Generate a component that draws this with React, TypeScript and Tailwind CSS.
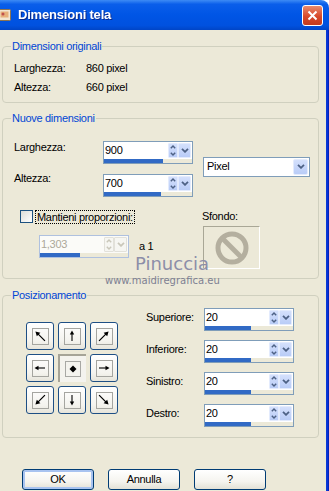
import type { ReactNode } from "react"

const font = "font-['Liberation_Sans',Arial,sans-serif]"

function Chev({ up, size = "sm", color = "#4D6185" }: { up?: boolean; size?: "sm" | "lg"; color?: string }) {
  if (size === "lg") {
    return (
      <svg width="8" height="5" viewBox="0 0 8 5">
        <path d="M1 0.8 L4 3.8 L7 0.8" fill="none" stroke={color} strokeWidth="1.8" />
      </svg>
    )
  }
  return (
    <svg width="6" height="4" viewBox="0 0 6 4">
      <path d={up ? "M0.8 3.3 L3 1 L5.2 3.3" : "M0.8 0.7 L3 3 L5.2 0.7"} fill="none" stroke={color} strokeWidth="1.4" />
    </svg>
  )
}

function Spin({ value, fill, disabled }: { value: string; fill: string; disabled?: boolean }) {
  const btn = disabled
    ? "bg-[#F6F6F2] border border-[#E2E1DA]"
    : "bg-[linear-gradient(to_bottom,#D4E0FC,#B9CCF7)] border border-[#E3EBFD]"
  const c = disabled ? "#C9C7BA" : "#4D6185"
  return (
    <div
      className={`w-[90px] h-[23px] border flex flex-col ${
        disabled ? "border-[#AFC1DF] bg-[#FBFBF8]" : "border-[#7F9DB9] bg-white"
      }`}
    >
      <div className="flex h-[17px]">
        <div className={`flex-1 pl-[1px] leading-[17px] ${disabled ? "text-[#ACA899]" : "text-black"}`}>{value}</div>
        <div className={`w-[10px] my-[1px] rounded-[1px] flex flex-col items-center justify-between py-[1px] ${btn}`}>
          <Chev up color={c} />
          <Chev color={c} />
        </div>
        <div className={`w-[13px] my-[1px] mr-[1px] rounded-[1px] flex items-center justify-center ${btn}`}>
          <Chev size="lg" color={c} />
        </div>
      </div>
      <div className="h-[4px] bg-[#ECE9D8]">
        <div className={`h-full bg-[#316AC5] ${fill}`} />
      </div>
    </div>
  )
}

function Group({ title, className, children }: { title: string; className?: string; children: ReactNode }) {
  return (
    <fieldset className={`w-[317px] ml-[2px] border border-[#D0D0BF] rounded-[4px] ${className ?? ""}`}>
      <legend className="ml-[8px] px-[1px] text-[#0046D5] leading-[13px]">{title}</legend>
      {children}
    </fieldset>
  )
}

// arrow drawn pointing up, rotated per direction
function Arrow({ deg }: { deg: number }) {
  const diag = deg % 90 !== 0
  return (
    <svg width="14" height="14" viewBox="0 0 14 14">
      <g transform={`rotate(${deg} 7 7)`}>
        {diag ? (
          <>
            <line x1="7" y1="14" x2="7" y2="3" stroke="#000" strokeWidth="1.2" />
            <polygon points="7,0.5 4.5,5 9.5,5" fill="#000" />
          </>
        ) : (
          <>
            <line x1="7" y1="12" x2="7" y2="4" stroke="#000" strokeWidth="1.1" />
            <polygon points="7,1.5 4.8,5.5 9.2,5.5" fill="#000" />
          </>
        )}
      </g>
    </svg>
  )
}

function PosButton({ deg, center }: { deg?: number; center?: boolean }) {
  if (center) {
    return (
      <div className="w-[28px] h-[28px] bg-[#F4F3EE] border-t-2 border-l-2 border-[#A6A497] flex items-center justify-center">
        <div className="w-[16px] h-[16px] border border-[#A8A8A4] flex items-center justify-center">
          <svg width="8" height="8" viewBox="0 0 8 8">
            <polygon points="4,0.5 7.5,4 4,7.5 0.5,4" fill="#000" />
          </svg>
        </div>
      </div>
    )
  }
  return (
    <div className="w-[28px] h-[28px] rounded-[3px] border border-[#1E4F85] bg-[linear-gradient(to_bottom,#FFFFFF,#F4F3EE_70%,#E6E4DA)] flex items-center justify-center">
      <div className="w-[17px] h-[17px] border border-[#A5A5A0] flex items-center justify-center">
        <Arrow deg={deg ?? 0} />
      </div>
    </div>
  )
}

function XpButton({ label, focus }: { label: string; focus?: boolean }) {
  return (
    <div
      className={`w-[72px] h-[21px] rounded-[3px] border border-[#003C74] bg-[linear-gradient(to_bottom,#FFFFFF,#F5F4EF_60%,#E3E1D6)] flex items-center justify-center leading-[13px] ${
        focus ? "shadow-[inset_0_0_0_2px_#A8C3F0]" : ""
      }`}
    >
      {label}
    </div>
  )
}

export default function App() {
  const posRows = [
    { label: "Superiore:" },
    { label: "Inferiore:" },
    { label: "Sinistro:" },
    { label: "Destro:" },
  ]

  return (
    <div className={`w-[329px] h-[491px] overflow-hidden bg-white text-[11px] tracking-[-0.3px] text-black ${font}`}>
      {/* Title bar */}
      <div className="h-[30px] rounded-tr-[8px] bg-[linear-gradient(to_bottom,#3D8BF5_0%,#0A5EEA_14%,#0055E5_50%,#0051DF_85%,#0045C6_100%)] flex items-center justify-between pr-[6px]">
        <div className="flex items-center">
          <svg width="14" height="14" viewBox="0 0 14 14" className="-ml-[2px] mr-[6px]">
            <rect x="0.5" y="1.5" width="12" height="11" rx="1" fill="#F2E6D0" stroke="#8C7350" />
            <rect x="2.5" y="3.5" width="8" height="6" fill="#E7B07A" />
            <circle cx="5" cy="6" r="1.5" fill="#C0504D" />
          </svg>
          <span className="text-white font-bold text-[13px] tracking-[-0.2px] drop-shadow-[1px_1px_0_#0A2A8C]">
            Dimensioni tela
          </span>
        </div>
        <div className="w-[21px] h-[21px] rounded-[3px] border border-white bg-[linear-gradient(to_bottom,#E98B6E,#D8492A_55%,#C23A1E)] flex items-center justify-center">
          <svg width="11" height="11" viewBox="0 0 11 11">
            <path d="M1.5 1.5 L9.5 9.5 M9.5 1.5 L1.5 9.5" stroke="#fff" strokeWidth="2" />
          </svg>
        </div>
      </div>

      <div className="flex h-[461px]">
        <div className="relative w-[326px] bg-[#ECE9D8]">
          {/* Dimensioni originali */}
          <Group title="Dimensioni originali" className="mt-[10px] pt-[7px] pb-[7px]">
            <div className="pl-[11px] flex flex-col gap-[3px]">
              <div className="flex h-[16px] items-center">
                <span className="w-[72px]">Larghezza:</span>
                <span>860 pixel</span>
              </div>
              <div className="flex h-[16px] items-center">
                <span className="w-[72px]">Altezza:</span>
                <span>660 pixel</span>
              </div>
            </div>
          </Group>

          {/* Nuove dimensioni */}
          <Group title="Nuove dimensioni" className="mt-[9px] pb-[9px]">
            <div className="pl-[11px] pt-[16px] flex items-center">
              <div className="flex flex-col gap-[10px]">
                <div className="flex items-start">
                  <span className="w-[89px] leading-[13px]">Larghezza:</span>
                  <Spin value="900" fill="w-[59px]" />
                </div>
                <div className="flex items-start">
                  <span className="w-[89px] leading-[13px] -mt-[2px]">Altezza:</span>
                  <Spin value="700" fill="w-[57px]" />
                </div>
              </div>
              <div className="ml-[10px] -mt-[5px] w-[107px] h-[20px] border border-[#7F9DB9] bg-white flex items-center">
                <span className="flex-1 pl-[3px]">Pixel</span>
                <div className="w-[15px] h-[16px] mr-[1px] rounded-[2px] border border-[#E3EBFD] bg-[linear-gradient(to_bottom,#D4E0FC,#B9CCF7)] flex items-center justify-center">
                  <Chev size="lg" />
                </div>
              </div>
            </div>

            <div className="pl-[11px] mt-[13px] flex">
              <div className="w-[188px]">
                <div className="flex items-center h-[13px] pl-[6px]">
                  <div className="w-[13px] h-[13px] border border-[#1C5180] bg-[linear-gradient(135deg,#DCDCD7,#FFFFFF)]" />
                  <span className="ml-[2px] px-[1px] border border-dotted border-black leading-[12px]">
                    Mantieni proporzioni:
                  </span>
                </div>
                <div className="mt-[12px] ml-[25px] flex items-center">
                  <Spin value="1,303" fill="w-[40px]" disabled />
                  <span className="ml-[10px]">a 1</span>
                </div>
              </div>
              <div className="flex flex-col">
                <span className="leading-[13px]">Sfondo:</span>
                <div className="mt-[3px] ml-[1px] w-[57px] h-[43px] border border-t-[#A9A796] border-l-[#A9A796] border-b-white border-r-white flex items-center justify-center">
                  <svg width="34" height="34" viewBox="0 0 34 34">
                    <circle cx="17" cy="17" r="14" fill="none" stroke="#B4AF9F" strokeWidth="5" />
                    <line x1="7" y1="7" x2="27" y2="27" stroke="#B4AF9F" strokeWidth="5" />
                  </svg>
                </div>
              </div>
            </div>
          </Group>

          {/* Posizionamento */}
          <Group title="Posizionamento" className="mt-[10px] pb-[10px]">
            <div className="flex">
              <div className="ml-[23px] mt-[20px] grid grid-cols-3 gap-[4px] self-start">
                <PosButton deg={-45} />
                <PosButton deg={0} />
                <PosButton deg={45} />
                <PosButton deg={-90} />
                <PosButton center />
                <PosButton deg={90} />
                <PosButton deg={-135} />
                <PosButton deg={180} />
                <PosButton deg={135} />
              </div>
              <div className="ml-[28px] mt-[6px] flex flex-col gap-[9px]">
                {posRows.map((r) => (
                  <div key={r.label} className="flex items-start">
                    <span className="w-[58px] leading-[13px] mt-[3px]">{r.label}</span>
                    <Spin value="20" fill="w-[46px]" />
                  </div>
                ))}
              </div>
            </div>
          </Group>

          <div className="mt-[31px] ml-[22px] flex gap-[14px]">
            <XpButton label="OK" focus />
            <XpButton label="Annulla" />
            <XpButton label="?" />
          </div>

          {/* watermark */}
          <div className="absolute left-[135px] top-[224px] font-['DejaVu_Sans',sans-serif] text-[18px] tracking-[0px] text-[#8C8EA8] leading-[20px]">
            Pinuccia
          </div>
          <div className="absolute left-[105px] top-[245px] font-['DejaVu_Sans',sans-serif] text-[10px] tracking-[0px] text-[#7D7F92] leading-[12px]">
            www.maidiregrafica.eu
          </div>
        </div>
        <div className="w-[3px] bg-[linear-gradient(to_right,#0A3FD0,#0831D9,#001EA8)]" />
      </div>
    </div>
  )
}
